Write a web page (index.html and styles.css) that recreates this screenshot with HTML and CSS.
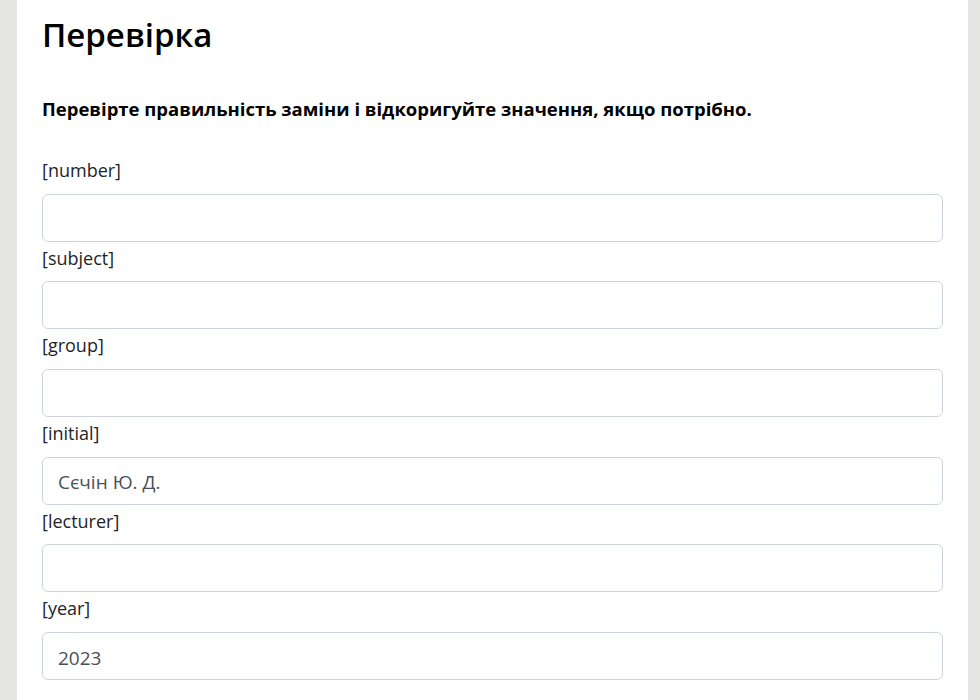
FILE: index.html
```html
<!DOCTYPE html>
<html lang="uk">
<head>
<meta charset="utf-8">
<link rel="stylesheet" href="styles.css">
</head>
<body>
<div class="card">
  <h1 class="title">Перевірка</h1>
  <p class="lead">Перевірте правильність заміни і відкоригуйте значення, якщо потрібно.</p>
  <form class="form">
    <label class="label">[number]</label>
    <input class="field" type="text" value="">
    <label class="label">[subject]</label>
    <input class="field" type="text" value="">
    <label class="label">[group]</label>
    <input class="field" type="text" value="">
    <label class="label">[initial]</label>
    <input class="field" type="text" value="Сєчін Ю. Д.">
    <label class="label">[lecturer]</label>
    <input class="field" type="text" value="">
    <label class="label">[year]</label>
    <input class="field" type="text" value="2023">
  </form>
</div>
</body>
</html>
```
FILE: styles.css
```css
html, body {
  margin: 0;
  padding: 0;
  background: #e5e5e3;
  font-family: "Open Sans", "Noto Sans", sans-serif;
  color: #212529;
}
.card {
  margin: 0 12px 0 17px;
  background: #fff;
  padding: 12px 25px 40px 25px;
  min-height: 700px;
  box-sizing: border-box;
}
.title {
  margin: 0;
  font-size: 33px;
  font-weight: 600;
  line-height: 46px;
  color: #000;
}
.lead {
  margin: 37px 0 32px 0;
  font-size: 18.5px;
  font-weight: 700;
  color: #000;
  line-height: 27px;
}
.form {
  display: flex;
  flex-direction: column;
}
.label {
  font-size: 18px;
  line-height: 27px;
  margin-top: 3px;
  margin-bottom: 9.7px;
}
.field {
  height: 48px;
  box-sizing: border-box;
  border: 1px solid #ced4da;
  border-radius: 6px;
  padding: 3px 15px 0 15px;
  font-family: inherit;
  font-size: 19px;
  color: #495057;
  background: #fff;
  outline: none;
}
```
